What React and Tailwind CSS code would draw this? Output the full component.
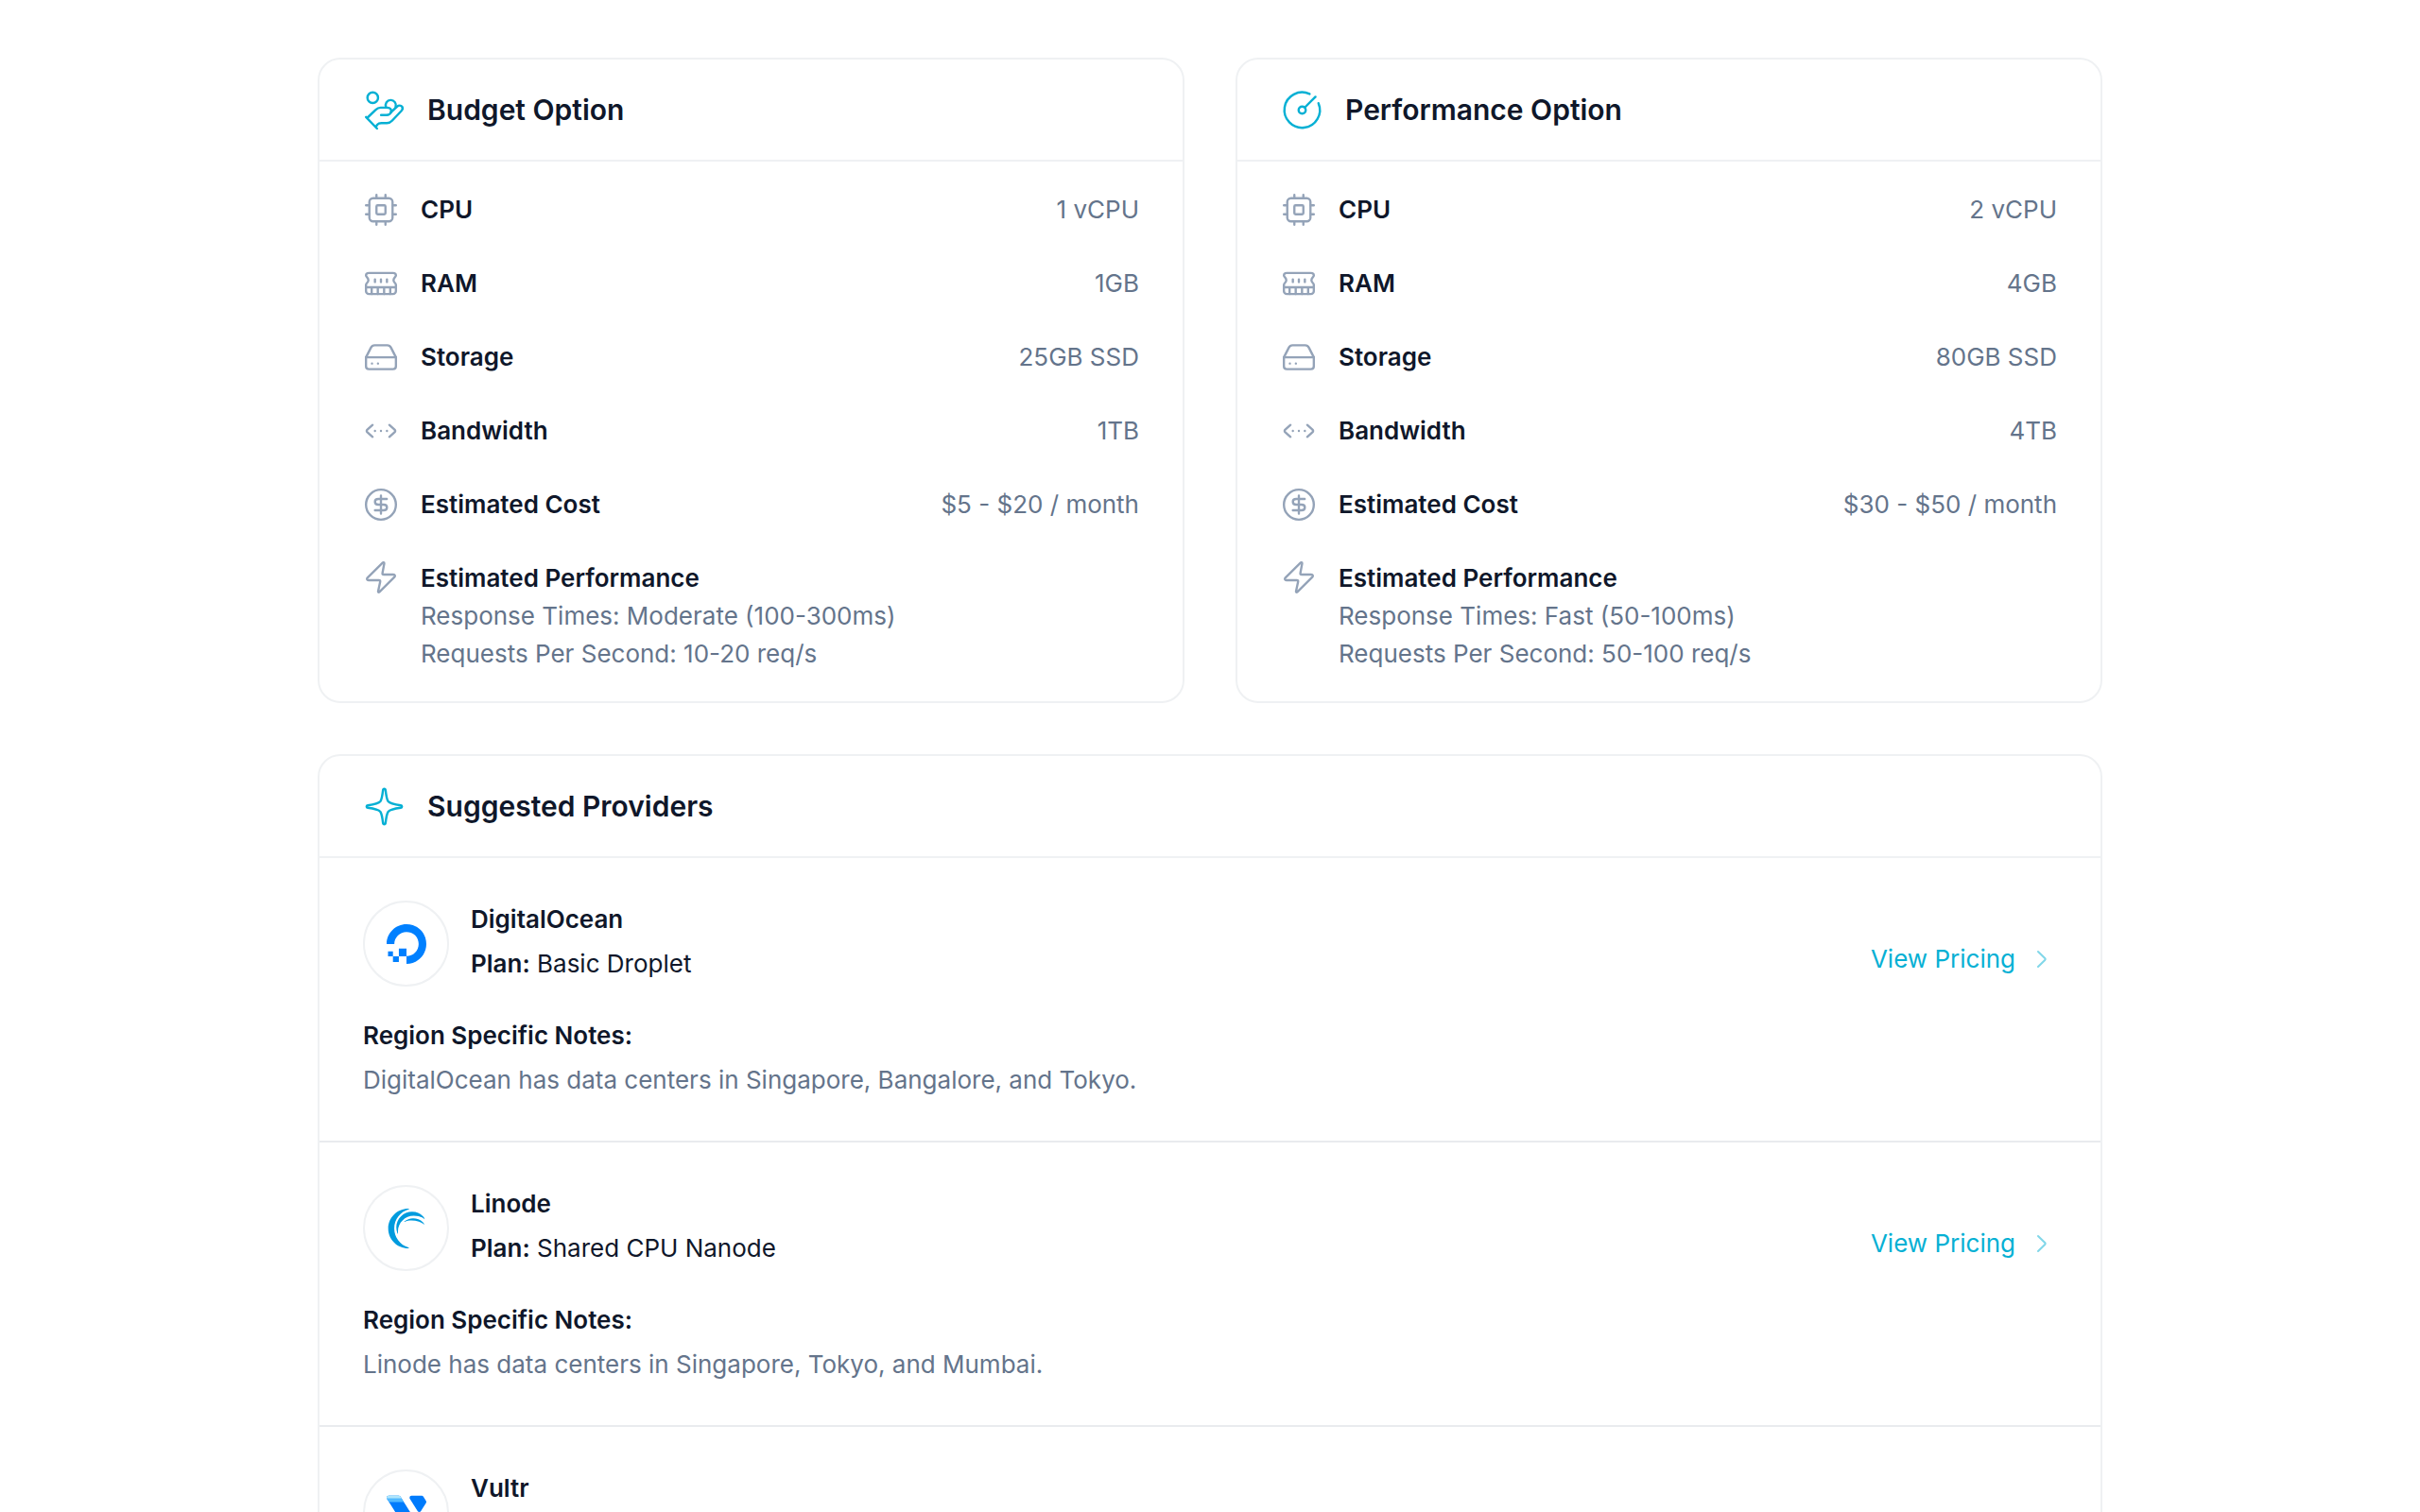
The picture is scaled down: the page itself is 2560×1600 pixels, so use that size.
import React from 'react';
import { SiAkamai, SiDigitalocean } from 'react-icons/si';

const Icon = ({ className, strokeWidth = 1.5, children }) => (
  <svg
    className={`shrink-0 ${className}`}
    viewBox="0 0 24 24"
    fill="none"
    stroke="currentColor"
    strokeWidth={strokeWidth}
    strokeLinecap="round"
    strokeLinejoin="round"
    aria-hidden="true"
  >
    {children}
  </svg>
);

const ICONS = {
  coins: (
    <>
      <circle cx="5.5" cy="5" r="3" />
      <path d="M13 10.4A2.9 2.9 0 1 1 18.4 10.2" />
      <path d="M1.7 15.9L7.9 22.4" />
      <path d="M2.8 16L7.2 11.8C8 11 8.8 10.6 9.9 10.6H13.3C14.9 10.6 15.9 11 15.9 12.4C15.9 13.8 14.6 14.8 13.2 14.8H10.2" />
      <path d="M15.6 13.4L19.2 10C20.1 9.2 21.4 9.2 22 10C22.5 10.8 22.4 11.7 21.7 12.4L16.4 18C15.5 19 14.8 19.3 13.5 19.3H10.4C9.4 19.3 8.6 19.6 8 20.3L7.4 21.2" />
    </>
  ),
  gauge: (
    <>
      <path d="M16.2 2.9A10 10 0 1 0 21.2 8.1" />
      <circle cx="12" cy="12" r="2" />
      <path d="M13.6 10.4L19.5 4.5" />
    </>
  ),
  star: (
    <path d="M12.7 2.6C13.1 6 13.3 7.9 14.2 9.1C15.3 10.4 17.6 10.8 21.3 11.3C22.2 11.5 22.2 12.5 21.3 12.7C17.6 13.2 15.3 13.6 14.2 14.9C13.3 16.1 13.1 18 12.7 21.4C12.5 22.2 11.5 22.2 11.3 21.4C10.9 18 10.7 16.1 9.8 14.9C8.7 13.6 6.4 13.2 2.7 12.7C1.8 12.5 1.8 11.5 2.7 11.3C6.4 10.8 8.7 10.4 9.8 9.1C10.7 7.9 10.9 6 11.3 2.6C11.5 1.8 12.5 1.8 12.7 2.6Z" />
  ),
  cpu: (
    <>
      <rect x="4.25" y="4.25" width="15.5" height="15.5" rx="2.5" />
      <rect x="9" y="9" width="6" height="6" rx="0.8" />
      <path d="M9 2V4M15 2V4M9 20V22M15 20V22M2 9H4M2 15H4M20 9H22M20 15H22" />
    </>
  ),
  ram: (
    <>
      <path d="M4 5H20C21.1 5 22 5.7 22 6.6C22 7.8 20.4 8 20.4 9.8C20.4 11.4 22 11.6 22 13V17C22 18.1 21.1 19 20 19H4C2.9 19 2 18.1 2 17V13C2 11.6 3.6 11.4 3.6 9.8C3.6 8 2 7.8 2 6.6C2 5.7 2.9 5 4 5Z" />
      <path d="M2 14.5H22M5.8 14.5V19M9.9 14.5V19M14.1 14.5V19M18.2 14.5V19M8 9.2V11M12 9.2V11M16 9.2V11" />
    </>
  ),
  storage: (
    <>
      <path d="M2 12V18C2 19.3 2.7 20 4 20H20C21.3 20 22 19.3 22 18V12" />
      <path d="M2 12.1L5.3 5.6C5.9 4.4 6.4 4 7.7 4H16.3C17.6 4 18.1 4.4 18.7 5.6L22 12.1Z" />
      <path d="M6 16.2H6.01M10 16.2H10.01" />
    </>
  ),
  bandwidth: (
    <>
      <path d="M6.4 8L2.9 11.1C2.3 11.7 2.3 12.3 2.9 12.9L6.4 16M17.6 8L21.1 11.1C21.7 11.7 21.7 12.3 21.1 12.9L17.6 16" />
      <path d="M8 12H8.01M12 12H12.01M16 12H16.01" />
    </>
  ),
  cost: (
    <>
      <circle cx="12" cy="12" r="10" />
      <path d="M12 6V18M15.9 8.2H10.2C8.9 8.2 8 9 8 10.1C8 11.2 8.9 12 10.2 12H13.8C15.1 12 16 12.8 16 13.9C16 15 15.1 15.8 13.8 15.8H8" />
    </>
  ),
  bolt: (
    <path d="M12.9 2.4L3 12.2C2.3 13 2.6 13.9 3.7 13.9H10.6C11.4 13.9 11.6 14.2 11.5 14.9L10.1 21.3C10 22 10.5 22.2 11 21.7L21 11.8C21.7 11 21.4 10.1 20.3 10.1H13.9C13.1 10.1 12.8 9.8 13 9.1L14.2 2.7C14.3 2 13.5 1.8 12.9 2.4Z" />
  ),
};

const VultrLogo = ({ className }) => (
  <svg className={className} viewBox="0 0 24 24" aria-hidden="true">
    <clipPath id="vultr-wing">
      <path d="M8.36 2.172A1.194 1.194 0 0 0 7.348 1.6H1.2A1.2 1.2 0 0 0 0 2.8a1.211 1.211 0 0 0 .182.64l11.6 18.4a1.206 1.206 0 0 0 2.035 0l3.075-4.874a1.229 1.229 0 0 0 .182-.64 1.21 1.21 0 0 0-.182-.642z" />
    </clipPath>
    <g clipPath="url(#vultr-wing)">
      <path fill="#007bfc" d="M0 0h24v24H0z" />
      <path fill="#51b9ff" d="M0 0h12v5.4H0z" />
      <path fill="#b0e5fb" d="M0 0h12v3.2H0z" />
    </g>
    <path
      fill="#007bfc"
      d="M18.709 10.852a1.206 1.206 0 0 0 2.035 0L21.8 9.178l2.017-3.2a1.211 1.211 0 0 0 .183-.64 1.229 1.229 0 0 0-.183-.64l-1.6-2.526a1.206 1.206 0 0 0-1.016-.571h-6.148a1.2 1.2 0 0 0-1.201 1.2 1.143 1.143 0 0 0 .188.64z"
    />
  </svg>
);

const OPTIONS = [
  {
    title: 'Budget Option',
    icon: 'coins',
    specs: [
      { icon: 'cpu', label: 'CPU', value: '1 vCPU' },
      { icon: 'ram', label: 'RAM', value: '1GB' },
      { icon: 'storage', label: 'Storage', value: '25GB SSD' },
      { icon: 'bandwidth', label: 'Bandwidth', value: '1TB' },
      { icon: 'cost', label: 'Estimated Cost', value: '$5 - $20 / month' },
    ],
    responseTimes: 'Moderate (100-300ms)',
    requests: '10-20 req/s',
  },
  {
    title: 'Performance Option',
    icon: 'gauge',
    specs: [
      { icon: 'cpu', label: 'CPU', value: '2 vCPU' },
      { icon: 'ram', label: 'RAM', value: '4GB' },
      { icon: 'storage', label: 'Storage', value: '80GB SSD' },
      { icon: 'bandwidth', label: 'Bandwidth', value: '4TB' },
      { icon: 'cost', label: 'Estimated Cost', value: '$30 - $50 / month' },
    ],
    responseTimes: 'Fast (50-100ms)',
    requests: '50-100 req/s',
  },
];

const PROVIDERS = [
  {
    name: 'DigitalOcean',
    logo: <SiDigitalocean className="size-[42px] text-[#0080ff]" />,
    plan: 'Basic Droplet',
    pricing: '#digitalocean',
    notes: 'DigitalOcean has data centers in Singapore, Bangalore, and Tokyo.',
  },
  {
    name: 'Linode',
    logo: <SiAkamai className="size-[42px] text-[#009bde]" />,
    plan: 'Shared CPU Nanode',
    pricing: '#linode',
    notes: 'Linode has data centers in Singapore, Tokyo, and Mumbai.',
  },
  {
    name: 'Vultr',
    logo: <VultrLogo className="size-[42px]" />,
  },
];

const Card = ({ title, icon, children }) => (
  <section className="rounded-3xl border-2 border-[#eff1f3] bg-white">
    <header className="flex h-[108px] items-center gap-[23px] border-b-2 border-[#eff1f3] px-[46px]">
      <Icon className="size-[45px] text-[#06b0d4]" strokeWidth={1.3}>
        {ICONS[icon]}
      </Icon>
      <h2 className="text-[30px] leading-10 font-semibold">{title}</h2>
    </header>
    {children}
  </section>
);

const OptionCard = ({ option }) => (
  <Card title={option.title} icon={option.icon}>
    <dl className="flex flex-col gap-[38px] px-[46px] pt-[31px] pb-[30px]">
      {option.specs.map((spec) => (
        <div key={spec.label} className="flex h-10 items-center gap-[23px]">
          <Icon className="size-[38px] text-[#94a3b8]">{ICONS[spec.icon]}</Icon>
          <dt className="font-semibold">{spec.label}</dt>
          <dd className="ml-auto text-[#64748b]">{spec.value}</dd>
        </div>
      ))}
      <div className="flex items-start gap-[23px]">
        <Icon className="size-[38px] text-[#94a3b8]">{ICONS.bolt}</Icon>
        <div>
          <dt className="font-semibold">Estimated Performance</dt>
          <dd className="text-[#64748b]">Response Times: {option.responseTimes}</dd>
          <dd className="text-[#64748b]">Requests Per Second: {option.requests}</dd>
        </div>
      </div>
    </dl>
  </Card>
);

const ProviderRow = ({ provider }) => (
  <li className="px-[46px] pt-[45px] pb-11">
    <div className="flex items-start gap-[23px]">
      <div className="flex size-[91px] shrink-0 items-center justify-center rounded-full border-2 border-[#eff1f3]">
        {provider.logo}
      </div>
      <div className="flex flex-col gap-[7px]">
        <h3 className="font-semibold">{provider.name}</h3>
        {provider.plan && (
          <p>
            <span className="font-semibold">Plan:</span> {provider.plan}
          </p>
        )}
      </div>
      {provider.pricing && (
        <a href={provider.pricing} className="mt-[42px] ml-auto flex items-center gap-3 text-[#06b0d4]">
          View Pricing
          <Icon className="size-8 opacity-50">
            <path d="M9 6L14.4 11.3C14.9 11.8 14.9 12.2 14.4 12.7L9 18" />
          </Icon>
        </a>
      )}
    </div>
    {provider.notes && (
      <div className="mt-8 flex flex-col gap-[7px]">
        <h4 className="font-semibold">Region Specific Notes:</h4>
        <p className="text-[#64748b]">{provider.notes}</p>
      </div>
    )}
  </li>
);

export default function App() {
  return (
    <main className="h-screen overflow-hidden bg-white px-8 pt-[61px] font-['Inter',sans-serif] text-[26px] leading-10 text-[#0f172a]">
      <div className="mx-auto flex max-w-[1888px] flex-col gap-[54px]">
        <div className="grid grid-cols-2 gap-[54px]">
          {OPTIONS.map((option) => (
            <OptionCard key={option.title} option={option} />
          ))}
        </div>
        <Card title="Suggested Providers" icon="star">
          <ul className="divide-y-2 divide-[#e9ebee]">
            {PROVIDERS.map((provider) => (
              <ProviderRow key={provider.name} provider={provider} />
            ))}
          </ul>
        </Card>
      </div>
    </main>
  );
}
